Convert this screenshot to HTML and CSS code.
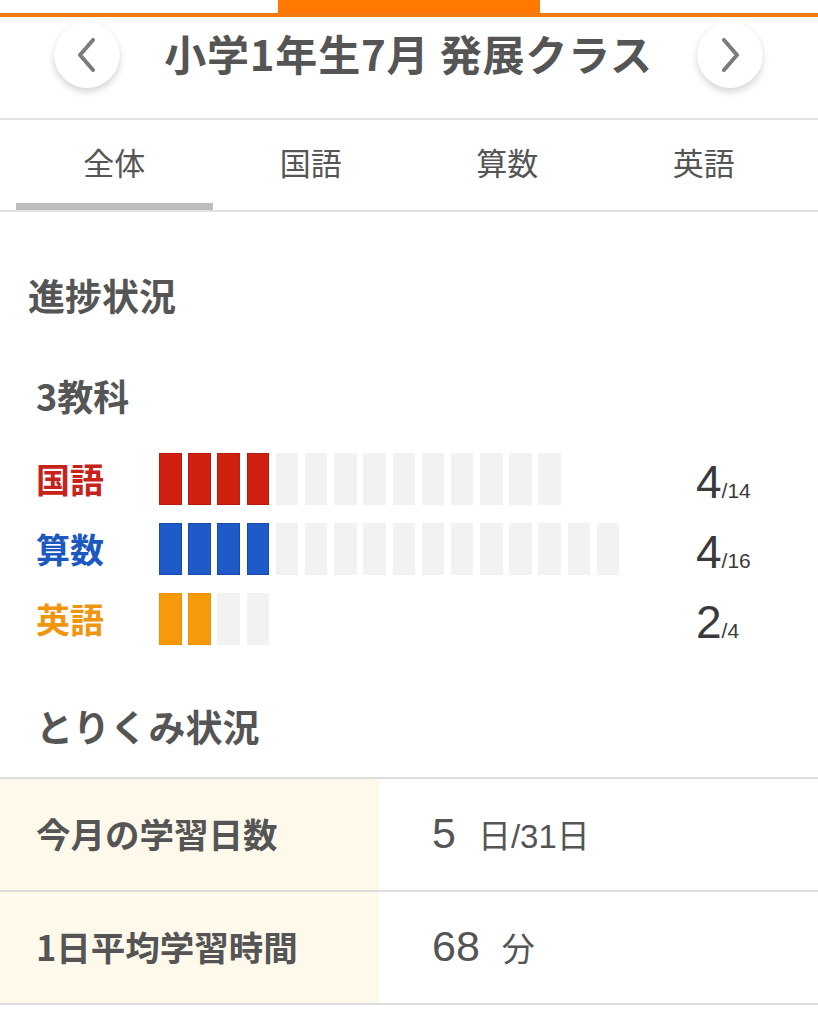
FILE: index.html
```html
<!DOCTYPE html>
<html lang="ja">
<head>
<meta charset="utf-8">
<title>小学1年生7月 発展クラス</title>
<link rel="stylesheet" href="styles.css">
</head>
<body>
<header class="header">
  <div class="accent"><div class="accent-tab"></div></div>
  <div class="accent-line"></div>
  <div class="title-row">
    <button class="nav-btn" aria-label="前へ">
      <svg width="24" height="36" viewBox="0 0 24 36"><polyline points="18,3 5,18 18,33" fill="none" stroke="#7c7c7c" stroke-width="4" stroke-linecap="round" stroke-linejoin="round"/></svg>
    </button>
    <h1 class="title">小学1年生7月 発展クラス</h1>
    <button class="nav-btn" aria-label="次へ">
      <svg width="24" height="36" viewBox="0 0 24 36"><polyline points="6,3 19,18 6,33" fill="none" stroke="#7c7c7c" stroke-width="4" stroke-linecap="round" stroke-linejoin="round"/></svg>
    </button>
  </div>
</header>

<nav class="tabs">
  <div class="tab active">全体</div>
  <div class="tab">国語</div>
  <div class="tab">算数</div>
  <div class="tab">英語</div>
</nav>

<main>
  <h2 class="section-title">進捗状況</h2>
  <h3 class="sub-title">3教科</h3>

  <div class="subjects">
    <div class="subject-label kokugo">国語</div>
    <div class="blocks">
      <span class="blk red"></span><span class="blk red"></span><span class="blk red"></span><span class="blk red"></span>
      <span class="blk"></span><span class="blk"></span><span class="blk"></span><span class="blk"></span><span class="blk"></span>
      <span class="blk"></span><span class="blk"></span><span class="blk"></span><span class="blk"></span><span class="blk"></span>
    </div>
    <div class="score"><span class="num">4</span><span class="den">/14</span></div>

    <div class="subject-label sansu">算数</div>
    <div class="blocks">
      <span class="blk blue"></span><span class="blk blue"></span><span class="blk blue"></span><span class="blk blue"></span>
      <span class="blk"></span><span class="blk"></span><span class="blk"></span><span class="blk"></span><span class="blk"></span><span class="blk"></span>
      <span class="blk"></span><span class="blk"></span><span class="blk"></span><span class="blk"></span><span class="blk"></span><span class="blk"></span>
    </div>
    <div class="score"><span class="num">4</span><span class="den">/16</span></div>

    <div class="subject-label eigo">英語</div>
    <div class="blocks">
      <span class="blk orange"></span><span class="blk orange"></span><span class="blk"></span><span class="blk"></span>
    </div>
    <div class="score"><span class="num">2</span><span class="den">/4</span></div>
  </div>

  <h2 class="section-title activity">とりくみ状況</h2>

  <div class="stats">
    <div class="stat-row">
      <div class="stat-label">今月の学習日数</div>
      <div class="stat-value"><span class="big">5</span><span class="unit">日/31日</span></div>
    </div>
    <div class="stat-row">
      <div class="stat-label">1日平均学習時間</div>
      <div class="stat-value"><span class="big">68</span><span class="unit">分</span></div>
    </div>
  </div>
</main>
</body>
</html>
```

FILE: styles.css
```css
* { box-sizing: border-box; }

body {
  margin: 0;
  width: 818px;
  background: #ffffff;
  font-family: "Noto Sans CJK JP", "Noto Sans", sans-serif;
  color: #555555;
}

h1, h2, h3 { margin: 0; }

/* header */
.accent {
  height: 13px;
  display: flex;
  justify-content: center;
}
.accent-tab {
  width: 262px;
  background: #ff7800;
}
.accent-line {
  height: 4px;
  background: #f27a10;
}

.title-row {
  display: flex;
  justify-content: space-between;
  align-items: flex-start;
  padding: 5px 55px 30px 54px;
  border-bottom: 2px solid #e2e2e2;
}
.nav-btn {
  width: 66px;
  height: 66px;
  border-radius: 50%;
  border: none;
  background: #ffffff;
  box-shadow: 0 4px 7px rgba(0, 0, 0, 0.16), 0 0 2px rgba(0, 0, 0, 0.05);
  display: flex;
  align-items: center;
  justify-content: center;
  padding: 0;
}
.nav-btn svg { filter: blur(0.6px); }

.title {
  font-size: 42px;
  line-height: 66px;
  font-weight: 700;
  color: #555555;
  letter-spacing: 0.8px;
  margin-top: -2px;
}

/* tabs */
.tabs {
  display: flex;
  padding: 0 16px;
  border-bottom: 2px solid #e2e2e2;
}
.tab {
  flex: 1;
  text-align: center;
  font-size: 31px;
  line-height: 40px;
  padding: 22px 0 21px;
  border-bottom: 7px solid transparent;
  color: #555555;
}
.tab.active { border-bottom-color: #bdbdbd; }

/* progress */
.section-title {
  font-size: 37px;
  line-height: 40px;
  font-weight: 700;
  margin-top: 63px;
  padding-left: 28px;
  height: 40px;
}
.section-title.activity {
  margin-top: 61px;
  padding-left: 36px;
}
.sub-title {
  font-size: 36px;
  line-height: 40px;
  height: 40px;
  font-weight: 700;
  margin-top: 60px;
  padding-left: 36px;
}

.subjects {
  display: grid;
  grid-template-columns: 123px 537px 1fr;
  grid-auto-rows: 52px;
  row-gap: 18px;
  margin-top: 38px;
  padding-left: 36px;
  align-items: center;
}
.subject-label {
  font-size: 34px;
  line-height: 52px;
  height: 52px;
  font-weight: 700;
}
.kokugo { color: #c8231a; }
.sansu { color: #1d58c0; }
.eigo { color: #f0950f; }

.blocks {
  display: flex;
  gap: 6.7px;
  height: 52px;
}
.blk {
  width: 22.5px;
  height: 52px;
  background: #f2f2f2;
}
.blk.red { background: #d0200f; box-shadow: inset 0 0 0 1px #b81a0c; }
.blk.blue { background: #1e5ac8; box-shadow: inset 0 0 0 1px #1749a6; }
.blk.orange { background: #f6990b; box-shadow: inset 0 0 0 1px #ee8f06; }

.score {
  font-family: "Liberation Sans", "Noto Sans CJK JP", sans-serif;
  color: #3a3a3a;
  height: 52px;
  line-height: 52px;
  white-space: nowrap;
  padding-top: 3px;
}
.score .num { font-size: 46px; line-height: 52px; }
.score .den { font-size: 21px; line-height: 20px; }

/* stats table */
.stats {
  margin-top: 31px;
  border-top: 2px solid #dedede;
}
.stat-row {
  display: flex;
  height: 113px;
  border-bottom: 2px solid #dedede;
}
.stat-label {
  width: 379px;
  background: #fff9ec;
  padding-left: 36px;
  display: flex;
  align-items: center;
  font-size: 34.5px;
  font-weight: 700;
  color: #555555;
  padding-bottom: 4px;
}
.stat-value {
  display: flex;
  align-items: baseline;
  padding-left: 53px;
  padding-top: 30px;
  font-family: "Liberation Sans", "Noto Sans CJK JP", sans-serif;
  color: #555555;
}
.stat-value .big { font-size: 43px; margin-right: 22px; }
.stat-value .unit { font-size: 33px; }
```
